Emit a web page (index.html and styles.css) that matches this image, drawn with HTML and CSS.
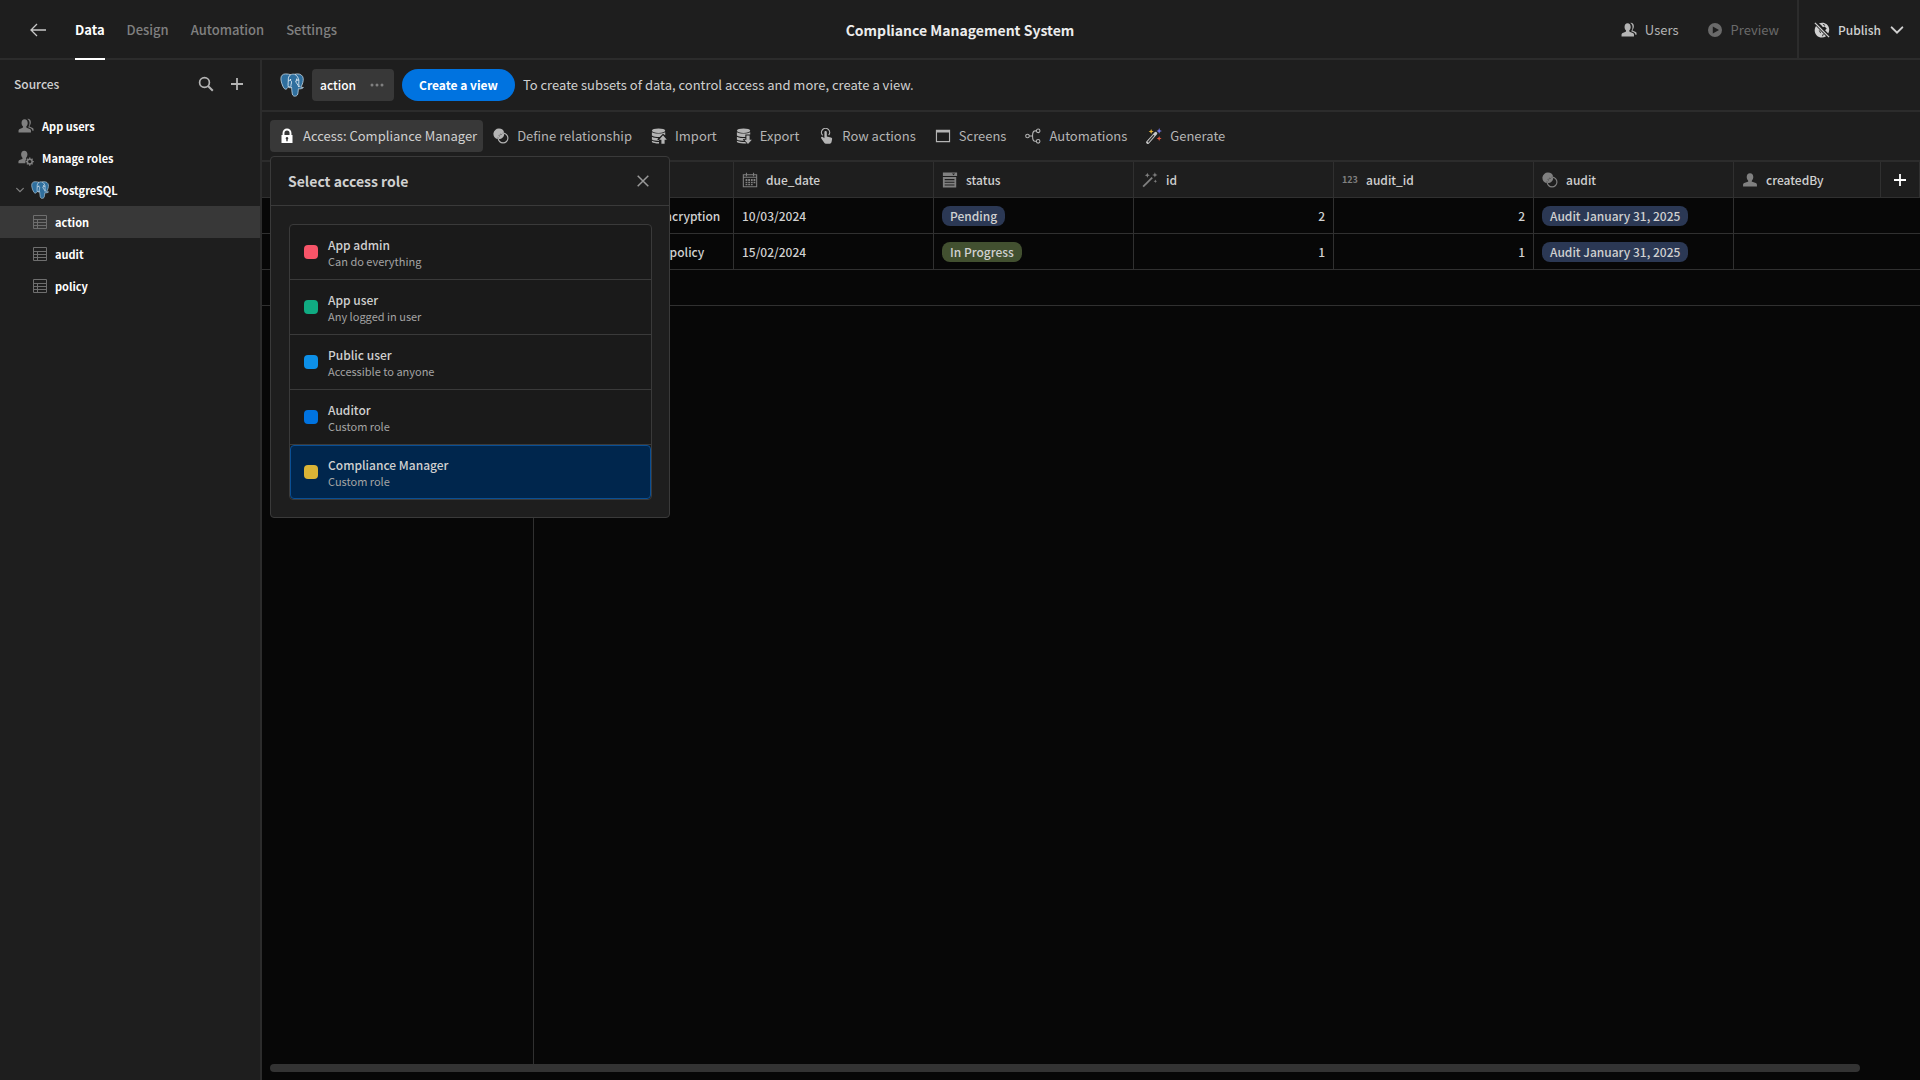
FILE: index.html
```
<!DOCTYPE html>
<html lang="en">
<head>
<meta charset="utf-8">
<title>Compliance Management System</title>
<link rel="stylesheet" href="styles.css">
</head>
<body>
<svg class="sprite" aria-hidden="true">
  <symbol id="i-users" viewBox="0 0 18 18"><path d="M7.400 1.500c2.200 0 3.500 1.700 3.500 4 0 1.600-.6 3-1.400 3.900-.3.400-.3 1.300.2 1.500l3.600 1.400c.8.300 1.300 1 1.300 1.900v2H.6v-2c0-.9.500-1.600 1.300-1.900l3.400-1.400c.5-.2.500-1.100.2-1.500-.8-.9-1.500-2.300-1.500-3.900 0-2.300 1.200-4 3.400-4z"/><path d="M10.600 1c2.200-.3 3.900 1.200 3.900 3.800 0 1.700-.6 2.900-1.400 3.800-.3.400-.1 1 .3 1.200l3.200 1.500c.6.300.9.900.9 1.500v1.500h-1.300c-.2-1.300-.9-2.200-2-2.700l-2.700-1.200c1-1.400 1.500-3 1.500-4.800 0-2-.8-3.700-2.400-4.600z"/></symbol>
  <symbol id="i-usergear" viewBox="0 0 18 18"><path d="M7 .8c2.300 0 3.600 1.700 3.600 4 0 1.700-.6 3-1.400 3.900-.4.500-.2 1.300.3 1.500A5 5 0 0 0 8.300 15H.5v-1.800c0-.9.500-1.600 1.300-1.900l2.900-1.200c.5-.2.600-1 .2-1.400-.8-.9-1.400-2.200-1.400-3.900 0-2.300 1.300-4 3.500-4z"/><circle cx="13.200" cy="13" r="2.700" fill="none" stroke="currentColor" stroke-width="1.700"/><path d="M13.200 8.400v2M13.200 15.600v2M8.600 13h2M15.800 13h2M10 9.800l1.300 1.300M15.100 14.900l1.300 1.300M16.400 9.800l-1.300 1.300M11.300 14.900L10 16.200" stroke="currentColor" stroke-width="1.500"/></symbol>
  <symbol id="i-user" viewBox="0 0 18 18"><path d="M9 1.500c2.400 0 3.700 1.800 3.700 4.100 0 1.600-.6 2.900-1.500 3.900-.4.500-.3 1.400.3 1.600l4 1.300c.8.300 1.300 1 1.300 1.900v2H1.200v-2c0-.9.500-1.600 1.300-1.900l4-1.300c.6-.2.700-1.100.3-1.600-.9-1-1.500-2.300-1.500-3.900 0-2.300 1.300-4.100 3.700-4.100z"/></symbol>
  <symbol id="i-pg" viewBox="0 0 24 24"><path d="M5.500.9C2.700.9.800 2.700.9 5.900c0 2.300 1.500 7.400 3.300 9.500 1 1.200 2.100.9 2.800.1l1.400-1.400c1.100.8 2.200.8 3.200.5.300 2.300.2 4.600.7 6.400.5 1.900 1.800 2.400 3.200 2.100 1.800-.4 2.300-1.500 2.500-3.400l.4-4c1.900.4 4 0 5-1.200-.8-.2-1.800-.1-2.600-.3 1.600-2.500 2.800-6.300 2.400-8.900C22.900 2.500 20.400.9 17.600.9c-1 0-1.900.1-2.700.4-1.400-.3-2.900-.3-4.200.4C9.300 1.200 7.400.9 5.500.9z" fill="#2f6f9e" stroke="#c4d8e6" stroke-width=".8"/><path d="M10.700 1.700C8.500 3 8.200 5 8.300 7.500c0 2.500-.6 4.500.1 6.500M8.300 7.800c1.300-.7 3-.5 3.200.7.300 2-1.200 3.400-.3 4.700M14.900 1.300c2.300 1.400 3.400 3.400 3.900 5.700-1.400.4-2.500.2-3.100.9.200 2.300 2.500 3.500 3 6.200M18.800 7c.3 2.500-.8 4.800.9 6.800M11.600 14.600c-.2-1-1.200-.8-2.700-.7" fill="none" stroke="#dce9f2" stroke-width=".9"/><circle cx="10.500" cy="6.600" r=".7" fill="#fff"/><circle cx="16.800" cy="6.300" r=".7" fill="#fff"/></symbol>
  <symbol id="i-table" viewBox="0 0 14 14"><path d="M.5.500h13v13H.5zM.5 4.500h13M.5 7.500h13M.5 10.500h13M4.500 4.500v9" fill="none" stroke="currentColor"/></symbol>
  <symbol id="i-chev" viewBox="0 0 12 12"><path d="M2 4l4 4 4-4" fill="none" stroke="currentColor" stroke-width="1.500" stroke-linecap="round"/></symbol>
  <symbol id="i-plus" viewBox="0 0 14 14"><path d="M7 1v12M1 7h12" stroke="currentColor" stroke-width="1.800"/></symbol>
  <symbol id="i-search" viewBox="0 0 16 16"><circle cx="6.500" cy="6.500" r="4.900" fill="none" stroke="currentColor" stroke-width="1.700"/><path d="M10 10l4.800 4.800" stroke="currentColor" stroke-width="2"/></symbol>
  <symbol id="i-rel" viewBox="0 0 18 18"><circle cx="11.300" cy="11.300" r="5.500" fill="none" stroke="currentColor" stroke-width="1.300"/><path d="M6.700.7a6 6 0 0 1 5.900 4.700 6.200 6.200 0 0 0-7.200 7.200A6 6 0 0 1 6.700.7z"/><path d="M12.600 6.500c.2 3.100-2.700 6.100-6.100 6.100C6.200 9 9 6.300 12.600 6.500z"/></symbol>
  <symbol id="i-import" viewBox="0 0 18 18"><ellipse cx="8.500" cy="3" rx="7.500" ry="2.500"/><path d="M1 4.800c3 2 12 2 15 0v3.300L13.500 6.500 9.800 10C6 10 2.500 9.500 1 8.300zM1 9.800c2 1.200 4.500 1.600 7.200 1.600L7 13.400h2v1C6 14.300 2.500 14 1 12.800zM1 14.300c2 1 5 1.400 8 1.400v1.800c-4 0-7-.6-8-1.700z"/><path d="M13.500 8.200l4.300 4.900h-2.500v4.700h-3.600v-4.700H9.200z"/></symbol>
  <symbol id="i-export" viewBox="0 0 18 18"><ellipse cx="8.500" cy="3" rx="7.500" ry="2.500"/><path d="M1 4.800c3 2 12 2 15 0v2.500h-5.500V10C6.500 10 2.500 9.500 1 8.300zM1 9.800c2.500 1.400 6 1.600 9.500 1.600v1H7.600l1.400 2C6 14.300 2.500 14 1 12.800zM1 14.300c2 1 5.500 1.400 9.300 1.400l1.500 1.600C6 17.900 2 16.900 1 15.800z"/><path d="M11.700 8.400h3.600v4.700h2.500L13.500 18l-4.300-4.900h2.500z"/></symbol>
  <symbol id="i-tap" viewBox="0 0 18 18"><path d="M5.300 8.300A4.600 4.600 0 1 1 12 8" fill="none" stroke="currentColor" stroke-width="1.400"/><path d="M7.200 4.800c0-1.900 2.700-1.900 2.700 0v4.700l4.600 1.100c1 .2 1.500.9 1.400 1.900l-.6 3.100c-.2 1.300-.9 2-2.100 2H9c-.9 0-1.500-.4-2-1.100l-3.400-5c-.7-1.200.7-2.300 1.800-1.400l1.800 1.500z"/></symbol>
  <symbol id="i-screen" viewBox="0 0 18 18"><path fill-rule="evenodd" d="M1 2h16v14H1zM2.300 5.200v9.500h13.400V5.200z"/></symbol>
  <symbol id="i-auto" viewBox="0 0 18 18"><g fill="none" stroke="currentColor" stroke-width="1.200"><circle cx="2.800" cy="9" r="2"/><circle cx="14.800" cy="3.200" r="2"/><circle cx="14.800" cy="15" r="2"/><path d="M4.800 9H8M12.800 3.200h-1.500C9 3.200 8.500 5 8.500 9s.5 6 2.800 6h1.500"/></g></symbol>
  <symbol id="i-wand" viewBox="0 0 18 18"><path d="M1.300 16.500L11.500 6.300" stroke="currentColor" stroke-width="2"/><path d="M6 .8l.8 2 2 .8-2 .8-.8 2-.8-2-2-.8 2-.8zM14.500.300l.8 2.200 2.200.8-2.200.8-.8 2.200-.8-2.200-2.200-.8 2.200-.8zM15 8.500l.6 1.400 1.400.6-1.400.6-.6 1.400-.6-1.400-1.400-.6 1.400-.6z"/></symbol>
  <symbol id="i-magic" viewBox="0 0 18 18"><path d="M2 16.200L10.800 6.200" stroke="#c8c8c8" stroke-width="3.600" stroke-linecap="round"/><path d="M2.200 16L9 8.200" stroke="#333" stroke-width="1.500"/><path d="M5.800 1.200l.8 2 2 .8-2 .8-.8 2-.8-2-2-.8 2-.8z" fill="#e8b63a"/><path d="M14.800 0l.9 2.400 2.300.9-2.300.9-.9 2.300-.9-2.300-2.300-.9 2.300-.9z" fill="#7377e8"/><path d="M14.800 9l.8 2 2 .8-2 .8-.8 2-.8-2-2-.8 2-.8z" fill="#e2553d"/></symbol>
  <symbol id="i-cal" viewBox="0 0 18 18"><path d="M1.500 3h15v13.500h-15zM1.500 6h15M5 .8v4M13 .8v4" fill="none" stroke="currentColor" stroke-width="1.200"/><path d="M4 8h2v2H4zM7 8h2v2H7zM10 8h2v2h-2zM13 8h2v2h-2zM4 11h2v1.600H4zM7 11h2v1.600H7zM10 11h2v1.600h-2zM13 11h2v1.600h-2zM4 13.600h2V15H4zM7 13.600h2V15H7zM10 13.600h2V15h-2z"/></symbol>
  <symbol id="i-list" viewBox="0 0 18 18"><path fill-rule="evenodd" d="M1 .5h16v4H1zM11.300 1.700l1.700 2 1.700-2z"/><path fill-rule="evenodd" d="M1 5.700h15v11.800H1zM3 8h11v1.200H3zM3 11h11v1.200H3zM3 14h11v1.200H3z"/></symbol>
  <symbol id="i-play" viewBox="0 0 16 16"><path fill-rule="evenodd" d="M8 1a7 7 0 1 1 0 14A7 7 0 0 1 8 1zM5.800 4.500v7L12 8z"/></symbol>
  <symbol id="i-globe" viewBox="0 0 18 18"><path d="M5.600 1.700C8.500.300 12 .600 14.300 2.600c3 2.700 3.700 7 1.700 10.300L12.500 9.300l1.800-1.900-2.500-2.200-1.700.7L8 3.500zM2.300 4.600l11.300 11.300c-3.300 2.300-7.700 2-10.500-.8-2.900-3-3.100-7.400-.8-10.500z"/><path d="M1 1l16 16" stroke="currentColor" stroke-width="1.500"/><path d="M6 9.500l1.500 3M9.500 16l1-2.500M10 2.500L12.500 4" stroke="#1e1e1e"/></symbol>
  <symbol id="i-lock" viewBox="0 0 16 16"><path d="M4.500 8V5a3.500 3.500 0 0 1 7 0v3" fill="none" stroke="currentColor" stroke-width="1.900"/><path fill-rule="evenodd" d="M2.500 7h11v8h-11zM8 9a1.300 1.300 0 0 0-.7 2.400V13.200h1.400v-1.800A1.300 1.300 0 0 0 8 9z"/></symbol>
  <symbol id="i-back" viewBox="0 0 16 14"><path d="M16 7H1M7 1L1 7l6 6" fill="none" stroke="currentColor" stroke-width="1.300"/></symbol>
  <symbol id="i-close" viewBox="0 0 12 12"><path d="M.7.700l10.600 10.600M11.300.700L.7 11.300" stroke="currentColor" stroke-width="1.500"/></symbol>
  <symbol id="i-dots" viewBox="0 0 14 4"><circle cx="2" cy="2" r="1.500"/><circle cx="7" cy="2" r="1.500"/><circle cx="12" cy="2" r="1.500"/></symbol>
</svg>

<div class="app">
  <header class="topbar">
    <div class="top-left">
      <button class="back" aria-label="Back"><svg class="icon"><use href="#i-back"/></svg></button>
      <nav class="tabs">
        <a class="tab active" href="#data">Data</a>
        <a class="tab" href="#design">Design</a>
        <a class="tab" href="#automation">Automation</a>
        <a class="tab" href="#settings">Settings</a>
      </nav>
    </div>
    <h1 class="title">Compliance Management System</h1>
    <div class="top-right">
      <button class="top-btn"><svg class="icon"><use href="#i-users"/></svg>Users</button>
      <button class="top-btn dim" disabled><svg class="icon"><use href="#i-play"/></svg>Preview</button>
      <button class="top-btn publish"><svg class="icon"><use href="#i-globe"/></svg>Publish<svg class="icon"><use href="#i-chev"/></svg></button>
    </div>
  </header>

  <div class="body">
    <aside class="sidebar">
      <div class="side-head">
        <h2 class="side-title">Sources</h2>
        <button class="side-btn" aria-label="Search"><svg class="icon"><use href="#i-search"/></svg></button>
        <button class="side-btn" aria-label="Add source"><svg class="icon add"><use href="#i-plus"/></svg></button>
      </div>
      <nav class="side-nav">
        <a class="nav-item" href="#users"><svg class="icon"><use href="#i-users"/></svg>App users</a>
        <a class="nav-item" href="#roles"><svg class="icon"><use href="#i-usergear"/></svg>Manage roles</a>
        <a class="nav-item source" href="#postgres"><svg class="icon chev"><use href="#i-chev"/></svg><svg class="icon pg"><use href="#i-pg"/></svg>PostgreSQL</a>
        <a class="nav-item nested selected" href="#action"><svg class="icon"><use href="#i-table"/></svg>action</a>
        <a class="nav-item nested" href="#audit"><svg class="icon"><use href="#i-table"/></svg>audit</a>
        <a class="nav-item nested" href="#policy"><svg class="icon"><use href="#i-table"/></svg>policy</a>
      </nav>
    </aside>

    <main class="main">
      <div class="view-bar">
        <svg class="icon pg-large"><use href="#i-pg"/></svg>
        <button class="view-tab">action<svg class="icon"><use href="#i-dots"/></svg></button>
        <button class="create">Create a view</button>
        <p class="hint">To create subsets of data, control access and more, create a view.</p>
      </div>

      <div class="toolbar">
        <button class="tool open"><svg class="icon"><use href="#i-lock"/></svg>Access: Compliance Manager</button>
        <button class="tool"><svg class="icon"><use href="#i-rel"/></svg>Define relationship</button>
        <button class="tool"><svg class="icon"><use href="#i-import"/></svg>Import</button>
        <button class="tool"><svg class="icon"><use href="#i-export"/></svg>Export</button>
        <button class="tool"><svg class="icon"><use href="#i-tap"/></svg>Row actions</button>
        <button class="tool"><svg class="icon"><use href="#i-screen"/></svg>Screens</button>
        <button class="tool"><svg class="icon"><use href="#i-auto"/></svg>Automations</button>
        <button class="tool"><svg class="icon"><use href="#i-magic"/></svg>Generate</button>

        <section class="popover" role="dialog" aria-label="Select access role">
          <div class="pop-head">
            <h2 class="pop-title">Select access role</h2>
            <button class="close" aria-label="Close"><svg class="icon"><use href="#i-close"/></svg></button>
          </div>
          <div class="roles">
            <button class="role"><span class="swatch admin"></span><span class="role-text"><span class="role-name">App admin</span><span class="role-note">Can do everything</span></span></button>
            <button class="role"><span class="swatch user"></span><span class="role-text"><span class="role-name">App user</span><span class="role-note">Any logged in user</span></span></button>
            <button class="role"><span class="swatch public"></span><span class="role-text"><span class="role-name">Public user</span><span class="role-note">Accessible to anyone</span></span></button>
            <button class="role"><span class="swatch auditor"></span><span class="role-text"><span class="role-name">Auditor</span><span class="role-note">Custom role</span></span></button>
            <button class="role chosen"><span class="swatch manager"></span><span class="role-text"><span class="role-name">Compliance Manager</span><span class="role-note">Custom role</span></span></button>
          </div>
        </section>
      </div>

      <div class="grid">
        <table class="data">
          <colgroup><col class="c-first"><col class="c"><col class="c"><col class="c"><col class="c"><col class="c"><col class="c"><col><col class="c-add"></colgroup>
          <thead>
            <tr>
              <th></th>
              <th></th>
              <th><span class="head"><svg class="icon"><use href="#i-cal"/></svg>due_date</span></th>
              <th><span class="head"><svg class="icon"><use href="#i-list"/></svg>status</span></th>
              <th><span class="head"><svg class="icon"><use href="#i-wand"/></svg>id</span></th>
              <th><span class="head"><span class="num-mark">123</span>audit_id</span></th>
              <th><span class="head"><svg class="icon"><use href="#i-rel"/></svg>audit</span></th>
              <th><span class="head"><svg class="icon"><use href="#i-user"/></svg>createdBy</span></th>
              <th class="add-cell"><button class="add-col" aria-label="Add column"><svg class="icon"><use href="#i-plus"/></svg></button></th>
            </tr>
          </thead>
          <tbody>
            <tr><td></td><td>Implement full data encryption</td><td>10/03/2024</td><td><span class="badge blue">Pending</span></td><td class="num">2</td><td class="num">2</td><td><span class="badge blue">Audit January 31, 2025</span></td><td class="last" colspan="2"></td></tr>
            <tr><td></td><td>Review access control policy</td><td>15/02/2024</td><td><span class="badge green">In Progress</span></td><td class="num">1</td><td class="num">1</td><td><span class="badge blue">Audit January 31, 2025</span></td><td class="last" colspan="2"></td></tr>
            <tr><td class="last" colspan="9"></td></tr>
          </tbody>
        </table>
        <div class="rest"><div class="frozen"></div></div>
        <div class="scroll"><div class="thumb"></div></div>
      </div>
    </main>
  </div>
</div>
</body>
</html>
```
FILE: styles.css
```
* { box-sizing: border-box; }

body {
  margin: 0;
  background: #070707;
  color: #d0d0d0;
  font-family: "Noto Sans CJK SC", "Open Sans", sans-serif;
  font-size: 13px;
  line-height: 16px;
}

button {
  margin: 0;
  padding: 0;
  border: 0;
  background: none;
  color: inherit;
  font: inherit;
  text-align: left;
}

a { color: inherit; text-decoration: none; }
h1, h2, p { margin: 0; }

.sprite { display: none; }
.icon { display: block; flex: none; width: 16px; height: 16px; fill: currentColor; }

.app { display: flex; flex-direction: column; min-height: 100vh; }

/* Top bar */
.topbar {
  display: grid;
  grid-template-columns: 1fr auto 1fr;
  height: 60px;
  background: #1e1e1e;
  border-bottom: 2px solid #2c2c2c;
}
.top-left { display: flex; align-items: center; padding-left: 30px; gap: 29px; }
.back { color: #c8c8c8; }
.tabs { display: flex; gap: 22px; height: 60px; align-self: flex-start; }
.tab {
  display: flex;
  align-items: center;
  padding-top: 2px;
  border-bottom: 2px solid transparent;
  color: #808080;
  font-weight: 500;
}
.tab.active { color: #fff; border-color: #fff; font-weight: 700; }
.title { align-self: center; color: #ececec; font-size: 14px; font-weight: 700; }
.top-right { display: flex; justify-content: flex-end; }
.top-btn { display: flex; align-items: center; gap: 8px; margin-right: 28px; color: #b4b4b4; }
.top-btn.dim { color: #6a6a6a; margin-right: 18px; }
.top-btn.publish {
  margin: 0;
  padding: 0 15px;
  border-left: 2px solid #2c2c2c;
  color: #d0d0d0;
  font-size: 12px;
  font-weight: 500;
}

/* Sidebar */
.body { display: flex; flex: 1; }
.sidebar { flex: none; width: 262px; background: #1e1e1e; border-right: 2px solid #2c2c2c; }
.side-head { display: flex; align-items: center; height: 48px; padding: 0 16px 0 14px; gap: 16px; }
.side-title { flex: 1; color: #d0d0d0; font-size: 12px; font-weight: 500; }
.side-btn { color: #b4b4b4; }
.side-btn .add { width: 14px; height: 14px; }
.side-nav { display: flex; flex-direction: column; padding-top: 2px; }
.nav-item {
  display: flex;
  align-items: center;
  gap: 8px;
  height: 32px;
  padding-left: 18px;
  color: #fff;
  font-size: 11px;
  font-weight: 700;
}
.nav-item .icon { color: #808080; }
.nav-item .chev { width: 10px; height: 10px; }
.nav-item .pg { width: 18px; height: 18px; }
.nav-item.source { gap: 6px; padding-left: 15px; }
.nav-item.nested { padding-left: 33px; }
.nav-item.nested .icon { width: 14px; height: 14px; color: #6e6e6e; }
.nav-item.selected { background: #383838; }

/* View bar and toolbar */
.main { display: flex; flex: 1; flex-direction: column; min-width: 0; }
.view-bar {
  display: flex;
  align-items: center;
  gap: 8px;
  height: 52px;
  padding-left: 18px;
  background: #1e1e1e;
  border-bottom: 2px solid #2c2c2c;
}
.pg-large { width: 24px; height: 24px; }
.view-tab {
  display: flex;
  align-items: center;
  gap: 14px;
  height: 32px;
  padding: 0 10px 0 8px;
  border-radius: 4px;
  background: #383838;
  color: #fff;
  font-size: 12px;
  font-weight: 500;
}
.view-tab .icon { width: 14px; height: 4px; color: #808080; }
.create {
  height: 32px;
  padding: 0 17px;
  border-radius: 16px;
  background: #0073e0;
  color: #fff;
  font-size: 12px;
  font-weight: 700;
}
.toolbar {
  position: relative;
  display: flex;
  align-items: center;
  gap: 1px;
  height: 50px;
  padding: 0 8px;
  background: #1e1e1e;
  border-bottom: 2px solid #2c2c2c;
}
.tool {
  display: flex;
  align-items: center;
  gap: 8px;
  height: 32px;
  padding: 0 9px;
  border-radius: 4px;
  color: #b4b4b4;
}
.tool.open { padding: 0 6px 0 9px; background: #383838; color: #d0d0d0; }
.tool.open .icon { color: #fff; }

/* Role picker */
.popover {
  position: absolute;
  top: 44px;
  left: 8px;
  z-index: 1;
  width: 400px;
  border: 1px solid #3a3a3a;
  border-radius: 4px;
  background: #1e1e1e;
}
.pop-head {
  display: flex;
  align-items: center;
  justify-content: space-between;
  height: 49px;
  padding: 0 20px 0 17px;
  border-bottom: 1px solid #3a3a3a;
}
.pop-title { color: #d0d0d0; font-size: 14px; font-weight: 700; }
.close { color: #9a9a9a; }
.close .icon { width: 12px; height: 12px; }
.roles {
  display: flex;
  flex-direction: column;
  margin: 18px 17px 17px 18px;
  border: 1px solid #3a3a3a;
  border-radius: 4px;
  background: #1a1a1a;
}
.role {
  display: flex;
  align-items: center;
  gap: 10px;
  height: 55px;
  padding-left: 14px;
  border-bottom: 1px solid #3a3a3a;
}
.role.chosen {
  height: 54px;
  padding-left: 13px;
  border: 1px solid #0a4f94;
  border-radius: 4px;
  background: #00264d;
}
.swatch { width: 14px; height: 14px; border-radius: 4px; }
.admin { background: #f75468; }
.user { background: #10ab82; }
.public { background: #0d90e8; }
.auditor { background: #0073e0; }
.manager { background: #dab436; }
.role-text { display: flex; flex-direction: column; }
.role-name { color: #d0d0d0; font-size: 12px; font-weight: 500; line-height: 17px; }
.role-note { color: #a4a4a4; font-size: 11px; }

/* Data grid */
.grid { display: flex; flex: 1; flex-direction: column; min-width: 0; }
.data { width: 100%; border-collapse: separate; border-spacing: 0; table-layout: fixed; font-size: 12px; }
.c-first { width: 272px; }
.c { width: 200px; }
.c-add { width: 39px; }
.data th, .data td {
  height: 36px;
  padding: 0 8px;
  border: 0 solid #303030;
  border-width: 0 1px 1px 0;
  color: #d0d0d0;
  font-weight: 500;
  text-align: left;
  white-space: nowrap;
}
.data th { background: #1e1e1e; }
.data .num { text-align: right; }
.data .last { border-right: 0; }
.head { display: flex; align-items: center; gap: 8px; }
.head .icon { color: #808080; }
.num-mark { width: 16px; color: #808080; font-size: 9px; font-weight: 700; }
.data .add-cell { padding: 0; }
.add-col { display: flex; align-items: center; justify-content: center; width: 100%; height: 35px; }
.add-col .icon { width: 14px; height: 14px; color: #fff; }
.badge {
  display: inline-block;
  padding: 0 8px;
  border-radius: 8px;
  line-height: 20px;
}
.blue { background: #2b3854; }
.green { background: #425030; }
.rest { display: flex; flex: 1; }
.frozen { width: 272px; border-right: 1px solid #303030; }
.scroll { display: flex; padding: 0 60px 8px 8px; }
.thumb { flex: 1; height: 8px; border-radius: 4px; background: #333; }
```
